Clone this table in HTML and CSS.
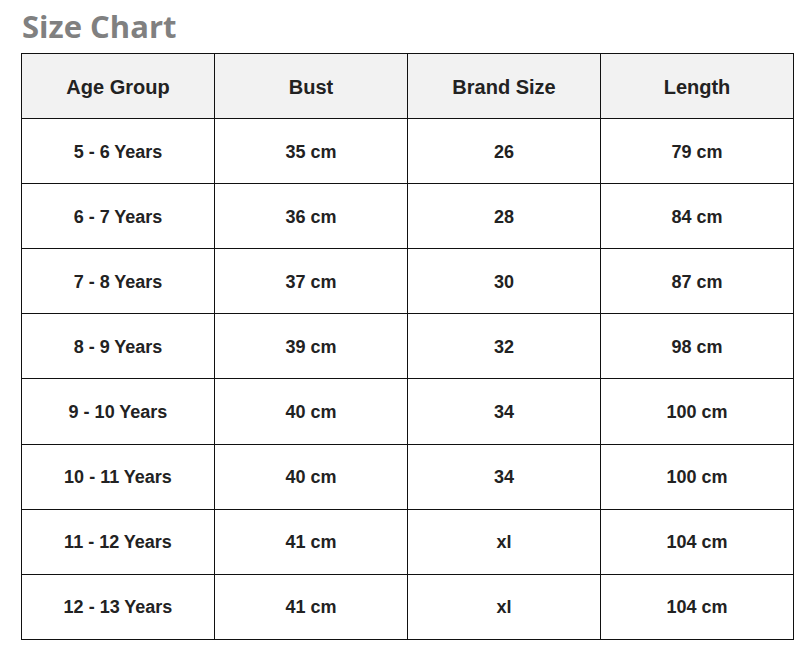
FILE: index.html
```html
<!DOCTYPE html>
<html>
<head>
<meta charset="utf-8">
<link rel="stylesheet" href="styles.css">
</head>
<body>
<div class="page">
  <h1 class="title">Size Chart</h1>
  <table class="chart">
    <thead>
      <tr><th>Age Group</th><th>Bust</th><th>Brand Size</th><th>Length</th></tr>
    </thead>
    <tbody>
      <tr><td>5 - 6 Years</td><td>35 cm</td><td>26</td><td>79 cm</td></tr>
      <tr><td>6 - 7 Years</td><td>36 cm</td><td>28</td><td>84 cm</td></tr>
      <tr><td>7 - 8 Years</td><td>37 cm</td><td>30</td><td>87 cm</td></tr>
      <tr><td>8 - 9 Years</td><td>39 cm</td><td>32</td><td>98 cm</td></tr>
      <tr><td>9 - 10 Years</td><td>40 cm</td><td>34</td><td>100 cm</td></tr>
      <tr><td>10 - 11 Years</td><td>40 cm</td><td>34</td><td>100 cm</td></tr>
      <tr><td>11 - 12 Years</td><td>41 cm</td><td>xl</td><td>104 cm</td></tr>
      <tr><td>12 - 13 Years</td><td>41 cm</td><td>xl</td><td>104 cm</td></tr>
    </tbody>
  </table>
</div>
</body>
</html>
```
FILE: styles.css
```css
html, body {
  margin: 0;
  padding: 0;
  background: #fff;
}
.page {
  padding: 0 0 0 21px;
}
.title {
  margin: 0;
  padding: 6px 0 0 1px;
  height: 53px;
  box-sizing: border-box;
  font-family: "Open Sans", "Liberation Sans", sans-serif;
  font-weight: 700;
  font-size: 31px;
  line-height: 40px;
  color: #808080;
}
.chart {
  border-collapse: collapse;
  width: 773px;
  table-layout: fixed;
  font-family: "Liberation Sans", Arial, sans-serif;
  color: #222;
}
.chart th, .chart td {
  border: 1px solid #111;
  text-align: center;
  height: 62.1px;
  padding: 2px 0 0;
  font-weight: 700;
}
.chart th {
  background: #f2f2f2;
  font-size: 20px;
}
.chart td {
  font-size: 18px;
}
```
